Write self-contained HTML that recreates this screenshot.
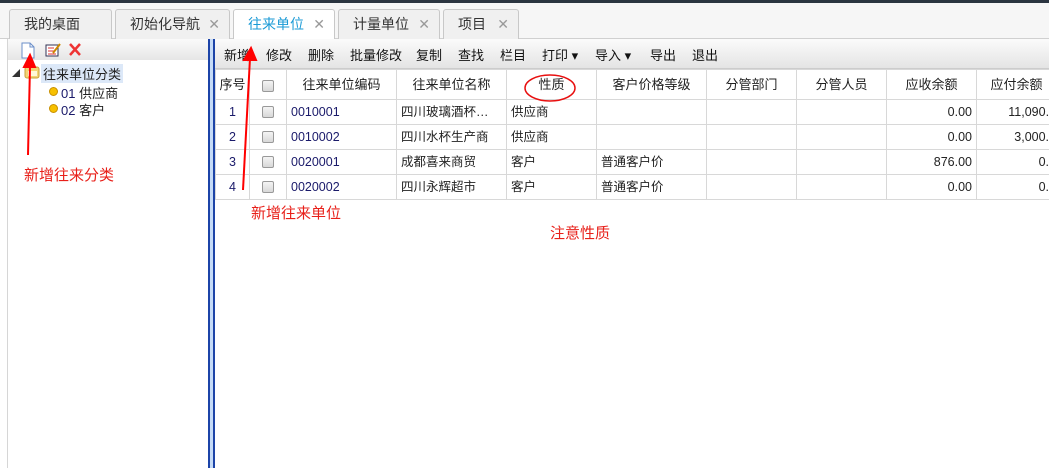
<!DOCTYPE html>
<html><head><meta charset="utf-8"><style>
*{margin:0;padding:0;box-sizing:border-box}
body{width:1049px;height:468px;overflow:hidden;background:#fff;font-family:"Liberation Sans","Noto Sans CJK SC",sans-serif;font-size:13px;color:#222;position:relative}
.abs{position:absolute}
.topbar{left:0;top:0;width:1049px;height:3px;background:#2b3540}
.tabbar{left:0;top:3px;width:1049px;height:36px;background:#f6f6f6;border-bottom:1px solid #d0d0d0}
.tab{position:absolute;top:6px;height:31px;border:1px solid #c8c8c8;border-bottom:none;background:#f0f0f0;border-radius:3px 3px 0 0;font-size:14px;line-height:28px;padding-left:14px;color:#333}
.tab .x{position:absolute;right:9px;top:0;color:#999;font-size:14px}
.tab.act{background:#fff;color:#1a9ad6;height:32px}
.lp{left:7px;top:39px;width:201px;height:429px;border-left:1px solid #d6d6d6}
.ltb{left:8px;top:39px;width:200px;height:21px;background:linear-gradient(#fafafa,#e6e6e6)}
.split{left:208px;top:39px;width:7px;height:429px;background:#c5dbf7;border-left:2px solid #1c44a8;border-right:2px solid #1c44a8}
.tb{left:215px;top:39px;width:834px;height:30px;background:linear-gradient(#fbfbfb,#e4e4e4);border-bottom:1px solid #ccc}
.tb span{position:absolute;top:6px;font-size:13px;color:#111}
table{position:absolute;left:215px;top:69px;border-collapse:collapse;table-layout:fixed;width:841px}
td{border:1px solid #d8d8d8;height:25px;line-height:23px;font-size:12.5px;padding:0 4px;white-space:nowrap;overflow:hidden;vertical-align:middle}
tr.h td{height:30px;text-align:center;font-size:13px}
.c{text-align:center}.r{text-align:right}
td.l{padding-right:0}
.cb{display:inline-block;width:12px;height:12px;border:1px solid #999;border-radius:2px;background:linear-gradient(#f4f4f4,#d8d8d8);vertical-align:middle}
.code{color:#1a1a6a}
.red{color:#e8201a;font-size:15px}
</style></head><body>
<div class="abs topbar"></div>
<div class="abs tabbar">
<div class="tab" style="left:9px;width:103px">我的桌面</div>
<div class="tab" style="left:115px;width:115px">初始化导航<span class="x">✕</span></div>
<div class="tab act" style="left:233px;width:102px">往来单位<span class="x">✕</span></div>
<div class="tab" style="left:338px;width:102px">计量单位<span class="x">✕</span></div>
<div class="tab" style="left:443px;width:76px">项目<span class="x">✕</span></div>
</div>
<div class="abs lp"></div>
<div class="abs ltb"></div>
<svg class="abs" style="left:20px;top:41px" width="70" height="18">
<path d="M2 2h8l4 4v11H2z" fill="#fff" stroke="#6b8fc9"/><path d="M10 2v4h4" fill="none" stroke="#6b8fc9"/>
<rect x="26" y="4" width="12" height="11" fill="#fff" stroke="#335"/><path d="M28 7h6M28 10h6M28 13h8" stroke="#d33"/><path d="M33 12l7-9" stroke="#c80" stroke-width="2"/>
<path d="M50 3l10 11M60 3L50 14" stroke="#e33" stroke-width="2.5"/>
</svg>
<div class="abs" style="left:12px;top:68px;font-size:8px;color:#333">◢</div>
<svg class="abs" style="left:24px;top:65px" width="16" height="14"><rect x="1" y="2" width="14" height="11" rx="2" fill="#f3d575" stroke="#c9a13a"/><rect x="4" y="6" width="9" height="5" fill="#fff8d8"/></svg>
<div class="abs" style="left:41px;top:64px;background:#dce8f8;padding:0 2px;font-size:13px">往来单位分类</div>
<div class="abs" style="left:49px;top:87px;width:9px;height:9px;border-radius:50%;background:#f7c000;border:1px solid #c89000"></div>
<div class="abs" style="left:61px;top:83px;font-size:13px"><span style="color:#1a1a6a">01</span> 供应商</div>
<div class="abs" style="left:49px;top:104px;width:9px;height:9px;border-radius:50%;background:#f7c000;border:1px solid #c89000"></div>
<div class="abs" style="left:61px;top:100px;font-size:13px"><span style="color:#1a1a6a">02</span> 客户</div>
<div class="abs split"></div>
<div class="abs tb">
<span style="left:9px">新增</span><span style="left:51px">修改</span><span style="left:93px">删除</span><span style="left:135px">批量修改</span><span style="left:201px">复制</span><span style="left:243px">查找</span><span style="left:285px">栏目</span><span style="left:327px">打印 ▾</span><span style="left:380px">导入 ▾</span><span style="left:435px">导出</span><span style="left:477px">退出</span>
</div>
<table>
<colgroup><col style="width:34px"><col style="width:37px"><col style="width:110px"><col style="width:110px"><col style="width:90px"><col style="width:110px"><col style="width:90px"><col style="width:90px"><col style="width:90px"><col style="width:80px"></colgroup>
<tr class="h"><td style="padding:0">序号</td><td><span class="cb"></span></td><td>往来单位编码</td><td>往来单位名称</td><td>性质</td><td>客户价格等级</td><td>分管部门</td><td>分管人员</td><td>应收余额</td><td>应付余额</td></tr>
<tr><td class="c code">1</td><td class="c"><span class="cb"></span></td><td class="code">0010001</td><td>四川玻璃酒杯…</td><td>供应商</td><td></td><td></td><td></td><td class="r">0.00</td><td class="r l">11,090.0</td></tr>
<tr><td class="c code">2</td><td class="c"><span class="cb"></span></td><td class="code">0010002</td><td>四川水杯生产商</td><td>供应商</td><td></td><td></td><td></td><td class="r">0.00</td><td class="r l">3,000.0</td></tr>
<tr><td class="c code">3</td><td class="c"><span class="cb"></span></td><td class="code">0020001</td><td>成都喜来商贸</td><td>客户</td><td>普通客户价</td><td></td><td></td><td class="r">876.00</td><td class="r l">0.0</td></tr>
<tr><td class="c code">4</td><td class="c"><span class="cb"></span></td><td class="code">0020002</td><td>四川永辉超市</td><td>客户</td><td>普通客户价</td><td></td><td></td><td class="r">0.00</td><td class="r l">0.0</td></tr>
</table>
<svg class="abs" style="left:0;top:0" width="1049" height="468">
<g stroke="#f00" stroke-width="2" fill="#f00">
<line x1="28" y1="155" x2="30" y2="66"/><path d="M24 67l6-12 5 12z"/>
<line x1="243" y1="190" x2="250" y2="58"/><path d="M244 60l7-12 5 12z"/>
</g>
<ellipse cx="550" cy="88" rx="25" ry="13" fill="none" stroke="#e81010" stroke-width="1.5"/>
</svg>
<div class="abs red" style="left:24px;top:164px">新增往来分类</div>
<div class="abs red" style="left:251px;top:202px">新增往来单位</div>
<div class="abs red" style="left:550px;top:222px">注意性质</div>
</body></html>
